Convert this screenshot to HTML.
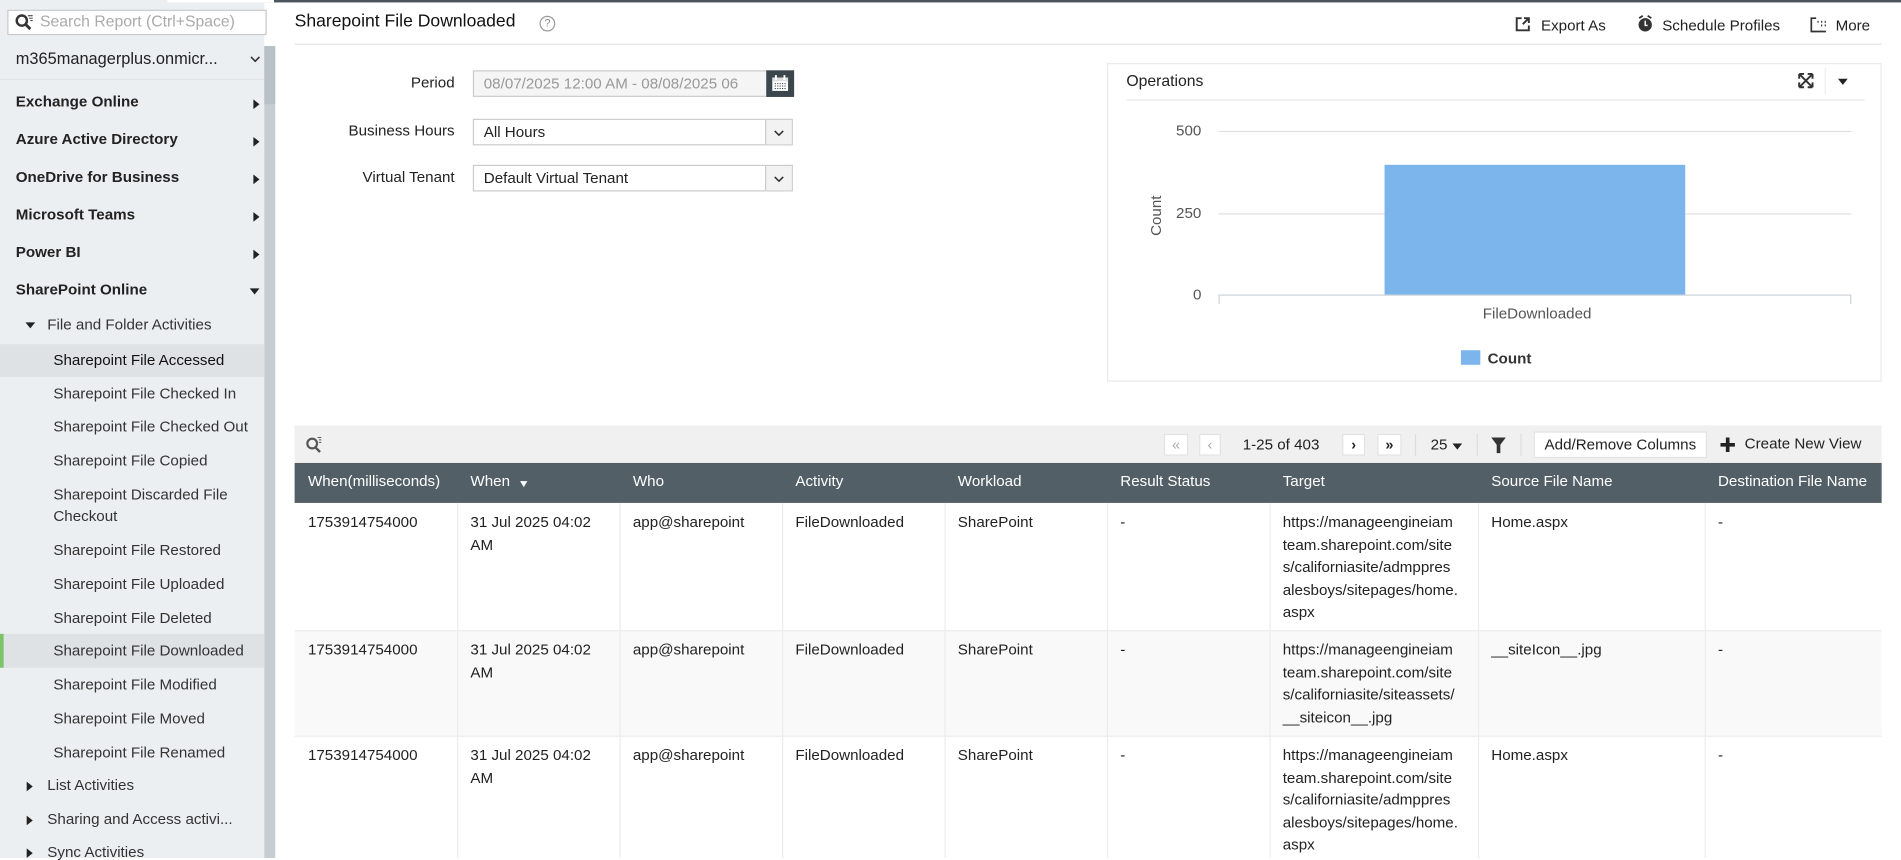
<!DOCTYPE html>
<html><head><meta charset="utf-8"><style>
html,body{margin:0;padding:0;width:1901px;height:858px;overflow:hidden;background:#fff}
#w{position:absolute;left:0;top:0;width:1568px;height:708px;transform:scale(1.2124,1.2119);transform-origin:0 0;font-family:"Liberation Sans",sans-serif;font-size:12.5px;color:#222}
.a{position:absolute;white-space:nowrap}
#sb{position:absolute;left:0;top:0;width:218px;height:708px;background:#eceff1}
#scr{position:absolute;left:218px;top:38px;width:9px;height:670px;background:#c6cdd3}
.nav{position:absolute;left:13px;font-weight:bold;font-size:12.5px;color:#222}
.tri{position:absolute;left:209px;width:0;height:0;border-top:4px solid transparent;border-bottom:4px solid transparent;border-left:5px solid #222}
.sub{position:absolute;left:44px;color:#333;font-size:12.5px}
.hl{position:absolute;left:0;width:218px;background:#dfe2e5}
.in{position:absolute;left:390px;width:264px;height:22px;border:1px solid #ccc;box-sizing:border-box;padding-left:8px;line-height:20px;font-size:12.5px}
.dd{position:absolute;right:0;top:0;width:21px;height:20px;border-left:1px solid #ccc;background:#f2f2f2}
.lab{position:absolute;right:1193px;font-size:12.5px}
.hc{position:absolute;top:382px;height:33px;line-height:31px;color:#fff;font-size:12.5px}
.vl{position:absolute;width:1px;background:#ececec}
.cell{position:absolute;font-size:12.5px;line-height:18.5px;color:#222;white-space:nowrap}
.btn{position:absolute;top:358px;height:18px;background:#fff;border:1px solid #e2e2e2;box-sizing:border-box;text-align:center;line-height:16px;font-size:12px}
</style></head><body><div id="w">
<div class="a" style="left:0;top:0;width:1568px;height:2px;background:#4a555e"></div>
<div id="sb"></div>
<div class="a" style="left:138px;top:0;width:88px;height:2px;background:#fff"></div>
<div id="scr"></div>
<div class="a" style="left:218px;top:38px;width:9px;height:48px;background:#b9c1c8"></div>
<div class="a" style="left:6px;top:8px;width:214px;height:21px;background:#fff;border:1px solid #c8c8c8;box-sizing:border-box"></div>
<svg class="a" style="left:12px;top:10px" width="16" height="16" viewBox="0 0 16 16"><circle cx="6" cy="7" r="4.2" fill="none" stroke="#333" stroke-width="2"/><path d="M9 10l4 4" stroke="#333" stroke-width="2.4"/><path d="M11 3h4M12 5h3M13 7h2" stroke="#333" stroke-width="0.8"/></svg>
<div class="a" style="left:33px;top:10px;color:#aaa;font-size:13px">Search Report (Ctrl+Space)</div>
<div class="a" style="left:13px;top:41px;font-size:13.5px">m365managerplus.onmicr...</div>
<svg class="a" style="left:206px;top:46px" width="9" height="6"><path d="M1 1l3.5 3.5L8 1" fill="none" stroke="#333" stroke-width="1.3"/></svg>
<div class="a" style="left:0;top:65px;width:218px;height:1px;background:#e2e5e8"></div>
<div class="nav" style="top:77px">Exchange Online</div><div class="tri" style="top:82px"></div>
<div class="nav" style="top:108px">Azure Active Directory</div><div class="tri" style="top:113px"></div>
<div class="nav" style="top:139px">OneDrive for Business</div><div class="tri" style="top:144px"></div>
<div class="nav" style="top:170px">Microsoft Teams</div><div class="tri" style="top:175px"></div>
<div class="nav" style="top:201px">Power BI</div><div class="tri" style="top:206px"></div>
<div class="nav" style="top:232px">SharePoint Online</div>
<div class="a" style="left:206px;top:238px;border-left:4px solid transparent;border-right:4px solid transparent;border-top:5px solid #222"></div>
<div class="a" style="left:21px;top:266px;border-left:4px solid transparent;border-right:4px solid transparent;border-top:5px solid #222"></div>
<div class="a" style="left:39px;top:261px;color:#333">File and Folder Activities</div>
<div class="hl" style="top:284px;height:27px"></div>
<div class="hl" style="top:523px;height:28px"></div>
<div class="a" style="left:0;top:523px;width:3px;height:28px;background:#7cc46a"></div>
<div class="sub" style="top:290px;color:#111">Sharepoint File Accessed</div>
<div class="sub" style="top:318px">Sharepoint File Checked In</div>
<div class="sub" style="top:345px">Sharepoint File Checked Out</div>
<div class="sub" style="top:373px">Sharepoint File Copied</div>
<div class="sub" style="top:401px">Sharepoint Discarded File</div>
<div class="sub" style="top:419px">Checkout</div>
<div class="sub" style="top:447px">Sharepoint File Restored</div>
<div class="sub" style="top:475px">Sharepoint File Uploaded</div>
<div class="sub" style="top:503px">Sharepoint File Deleted</div>
<div class="sub" style="top:530px">Sharepoint File Downloaded</div>
<div class="sub" style="top:558px">Sharepoint File Modified</div>
<div class="sub" style="top:586px">Sharepoint File Moved</div>
<div class="sub" style="top:614px">Sharepoint File Renamed</div>
<div class="tri" style="left:22px;top:645px"></div><div class="a" style="left:39px;top:641px;color:#333">List Activities</div>
<div class="tri" style="left:22px;top:673px"></div><div class="a" style="left:39px;top:669px;color:#333">Sharing and Access activi...</div>
<div class="tri" style="left:22px;top:700px"></div><div class="a" style="left:39px;top:696px;color:#333">Sync Activities</div>

<div class="a" style="left:243px;top:10px;font-size:14.5px;color:#111">Sharepoint File Downloaded</div>
<div class="a" style="left:445px;top:13px;width:11px;height:11px;border:1px solid #999;border-radius:50%;font-size:9px;line-height:11px;text-align:center;color:#888">?</div>
<div class="a" style="left:243px;top:36px;width:1309px;height:1px;background:#e5e5e5"></div>
<svg class="a" style="left:1249px;top:13px" width="14" height="14"><path d="M6 2H2v10h10V8" fill="none" stroke="#333" stroke-width="1.6"/><path d="M7 7l5-5M8 2h4v4" fill="none" stroke="#333" stroke-width="1.6"/></svg>
<div class="a" style="left:1271px;top:14px;font-size:12.5px">Export As</div>
<svg class="a" style="left:1350px;top:12px" width="14" height="15"><circle cx="7" cy="8.5" r="5.5" fill="#333"/><path d="M2 3l3-2M12 3l-3-2" stroke="#333" stroke-width="1.5"/><path d="M7 5v4h2" stroke="#fff" stroke-width="1.2" fill="none"/></svg>
<div class="a" style="left:1371px;top:14px;font-size:12.5px">Schedule Profiles</div>
<svg class="a" style="left:1493px;top:13px" width="14" height="14"><path d="M5 2H1v11h12" fill="none" stroke="#333" stroke-width="1.4"/><path d="M6 5h1M9 5h1M12 5h1M9 8h1M12 8h1" stroke="#333" stroke-width="1.6"/></svg>
<div class="a" style="left:1514px;top:14px;font-size:12.5px">More</div>

<div class="lab" style="top:61px">Period</div>
<div class="lab" style="top:101px">Business Hours</div>
<div class="lab" style="top:139px">Virtual Tenant</div>
<div class="in" style="top:58px;width:244px;background:#f5f5f5;color:#999;overflow:hidden;white-space:nowrap">08/07/2025 12:00 AM - 08/08/2025 06</div>
<div class="a" style="left:632px;top:58px;width:23px;height:22px;background:#3c464d"></div>
<svg class="a" style="left:636px;top:61px" width="15" height="15"><rect x="1" y="3" width="13" height="11" fill="#fff"/><rect x="1" y="3" width="13" height="3" fill="#ddd"/><path d="M4 1v4M11 1v4" stroke="#fff" stroke-width="1.6"/><path d="M3 8h9M3 10h9M3 12h9" stroke="#3c464d" stroke-width="0.8" stroke-dasharray="1 1"/></svg>
<div class="in" style="top:98px">All Hours<div class="dd"><svg style="position:absolute;left:6px;top:8px" width="9" height="6"><path d="M1 1l3.5 3.5L8 1" fill="none" stroke="#333" stroke-width="1.3"/></svg></div></div>
<div class="in" style="top:136px">Default Virtual Tenant<div class="dd"><svg style="position:absolute;left:6px;top:8px" width="9" height="6"><path d="M1 1l3.5 3.5L8 1" fill="none" stroke="#333" stroke-width="1.3"/></svg></div></div>

<div class="a" style="left:913px;top:52px;width:639px;height:263px;border:1px solid #eaeaea;box-sizing:border-box"></div>
<div class="a" style="left:929px;top:59px;font-size:13px">Operations</div>
<div class="a" style="left:929px;top:82px;width:609px;height:1px;background:#eaeaea"></div>
<div class="a" style="left:1505px;top:56px;width:1px;height:22px;background:#eee"></div>
<svg class="a" style="left:1483px;top:60px" width="13" height="13"><path d="M1 1l11 11M12 1L1 12M1 1h4M1 1v4M12 1h-4M12 1v4M1 12h4M1 12v-4M12 12h-4M12 12v-4" stroke="#333" stroke-width="1.6" fill="none"/></svg>
<div class="a" style="left:1516px;top:65px;border-left:4px solid transparent;border-right:4px solid transparent;border-top:5px solid #222"></div>
<div class="a" style="left:1005px;top:108px;width:522px;height:1px;background:#e0e0e0"></div>
<div class="a" style="left:1005px;top:176px;width:522px;height:1px;background:#e0e0e0"></div>
<div class="a" style="left:1005px;top:243px;width:522px;height:1px;background:#ccd3da"></div>
<div class="a" style="left:1005px;top:243px;width:1px;height:8px;background:#ccd3da"></div>
<div class="a" style="left:1526px;top:243px;width:1px;height:8px;background:#ccd3da"></div>
<div class="a" style="left:1142px;top:136px;width:248px;height:107px;background:#7cb5ec"></div>
<div class="a" style="left:970px;top:101px;color:#555">500</div>
<div class="a" style="left:970px;top:169px;color:#555">250</div>
<div class="a" style="left:984px;top:236px;color:#555">0</div>
<div class="a" style="left:937px;top:171px;transform:rotate(-90deg);color:#555;font-size:12.5px">Count</div>
<div class="a" style="left:1223px;top:252px;color:#555">FileDownloaded</div>
<div class="a" style="left:1205px;top:289px;width:16px;height:12px;background:#7cb5ec"></div>
<div class="a" style="left:1227px;top:289px;font-weight:bold;color:#333">Count</div>

<div class="a" style="left:243px;top:351px;width:1309px;height:31px;background:#f0f0f0"></div>
<svg class="a" style="left:252px;top:360px" width="14" height="15"><circle cx="5.5" cy="6" r="4" fill="none" stroke="#555" stroke-width="1.8"/><path d="M8 9l4 4" stroke="#555" stroke-width="2"/><path d="M10 1h3M11 3h2M11 5h2" stroke="#555" stroke-width="0.8"/></svg>
<div class="btn" style="left:960px;width:20px;color:#aaa">«</div>
<div class="btn" style="left:989px;width:18px;color:#aaa">‹</div>
<div class="a" style="left:1025px;top:360px">1-25 of 403</div>
<div class="btn" style="left:1107px;width:19px;font-weight:bold">›</div>
<div class="btn" style="left:1136px;width:20px;font-weight:bold">»</div>
<div class="a" style="left:1167px;top:358px;width:1px;height:18px;background:#ddd"></div>
<div class="a" style="left:1180px;top:360px">25</div>
<div class="a" style="left:1198px;top:366px;border-left:4px solid transparent;border-right:4px solid transparent;border-top:5px solid #222"></div>
<div class="a" style="left:1218px;top:358px;width:1px;height:18px;background:#ddd"></div>
<svg class="a" style="left:1230px;top:361px" width="12" height="13"><path d="M0 0h12L7.5 6v7h-3V6z" fill="#333"/></svg>
<div class="a" style="left:1254px;top:358px;width:1px;height:18px;background:#ddd"></div>
<div class="btn" style="left:1265px;top:356px;width:143px;height:22px;line-height:20px;font-size:12.5px">Add/Remove Columns</div>
<svg class="a" style="left:1419px;top:361px" width="12" height="12"><path d="M6 0v12M0 6h12" stroke="#222" stroke-width="3"/></svg>
<div class="a" style="left:1439px;top:359px">Create New View</div>

<div class="a" style="left:243px;top:382px;width:1309px;height:33px;background:#535f66"></div>
<div class="hc" style="left:254px">When(milliseconds)</div>
<div class="hc" style="left:388px">When</div>
<div class="a" style="left:429px;top:397px;border-left:3.5px solid transparent;border-right:3.5px solid transparent;border-top:5px solid #fff"></div>
<div class="hc" style="left:522px">Who</div>
<div class="hc" style="left:656px">Activity</div>
<div class="hc" style="left:790px">Workload</div>
<div class="hc" style="left:924px">Result Status</div>
<div class="hc" style="left:1058px">Target</div>
<div class="hc" style="left:1230px">Source File Name</div>
<div class="hc" style="left:1417px">Destination File Name</div>

<div class="a" style="left:243px;top:520px;width:1309px;height:87px;background:#f9f9f9"></div>
<div class="a" style="left:243px;top:520px;width:1309px;height:1px;background:#ececec"></div>
<div class="a" style="left:243px;top:607px;width:1309px;height:1px;background:#ececec"></div>
<div class="vl" style="left:377px;top:415px;height:293px"></div>
<div class="vl" style="left:511px;top:415px;height:293px"></div>
<div class="vl" style="left:645px;top:415px;height:293px"></div>
<div class="vl" style="left:779px;top:415px;height:293px"></div>
<div class="vl" style="left:913px;top:415px;height:293px"></div>
<div class="vl" style="left:1047px;top:415px;height:293px"></div>
<div class="vl" style="left:1219px;top:415px;height:293px"></div>
<div class="vl" style="left:1406px;top:415px;height:293px"></div>

<div class="cell" style="left:254px;top:422px">1753914754000</div>
<div class="cell" style="left:388px;top:422px">31 Jul 2025 04:02<br>AM</div>
<div class="cell" style="left:522px;top:422px">app@sharepoint</div>
<div class="cell" style="left:656px;top:422px">FileDownloaded</div>
<div class="cell" style="left:790px;top:422px">SharePoint</div>
<div class="cell" style="left:924px;top:422px">-</div>
<div class="cell" style="left:1058px;top:422px">https://manageengineiam<br>team.sharepoint.com/site<br>s/californiasite/admppres<br>alesboys/sitepages/home.<br>aspx</div>
<div class="cell" style="left:1230px;top:422px">Home.aspx</div>
<div class="cell" style="left:1417px;top:422px">-</div>

<div class="cell" style="left:254px;top:527px">1753914754000</div>
<div class="cell" style="left:388px;top:527px">31 Jul 2025 04:02<br>AM</div>
<div class="cell" style="left:522px;top:527px">app@sharepoint</div>
<div class="cell" style="left:656px;top:527px">FileDownloaded</div>
<div class="cell" style="left:790px;top:527px">SharePoint</div>
<div class="cell" style="left:924px;top:527px">-</div>
<div class="cell" style="left:1058px;top:527px">https://manageengineiam<br>team.sharepoint.com/site<br>s/californiasite/siteassets/<br>__siteicon__.jpg</div>
<div class="cell" style="left:1230px;top:527px">__siteIcon__.jpg</div>
<div class="cell" style="left:1417px;top:527px">-</div>

<div class="cell" style="left:254px;top:614px">1753914754000</div>
<div class="cell" style="left:388px;top:614px">31 Jul 2025 04:02<br>AM</div>
<div class="cell" style="left:522px;top:614px">app@sharepoint</div>
<div class="cell" style="left:656px;top:614px">FileDownloaded</div>
<div class="cell" style="left:790px;top:614px">SharePoint</div>
<div class="cell" style="left:924px;top:614px">-</div>
<div class="cell" style="left:1058px;top:614px">https://manageengineiam<br>team.sharepoint.com/site<br>s/californiasite/admppres<br>alesboys/sitepages/home.<br>aspx</div>
<div class="cell" style="left:1230px;top:614px">Home.aspx</div>
<div class="cell" style="left:1417px;top:614px">-</div>
</div></body></html>
